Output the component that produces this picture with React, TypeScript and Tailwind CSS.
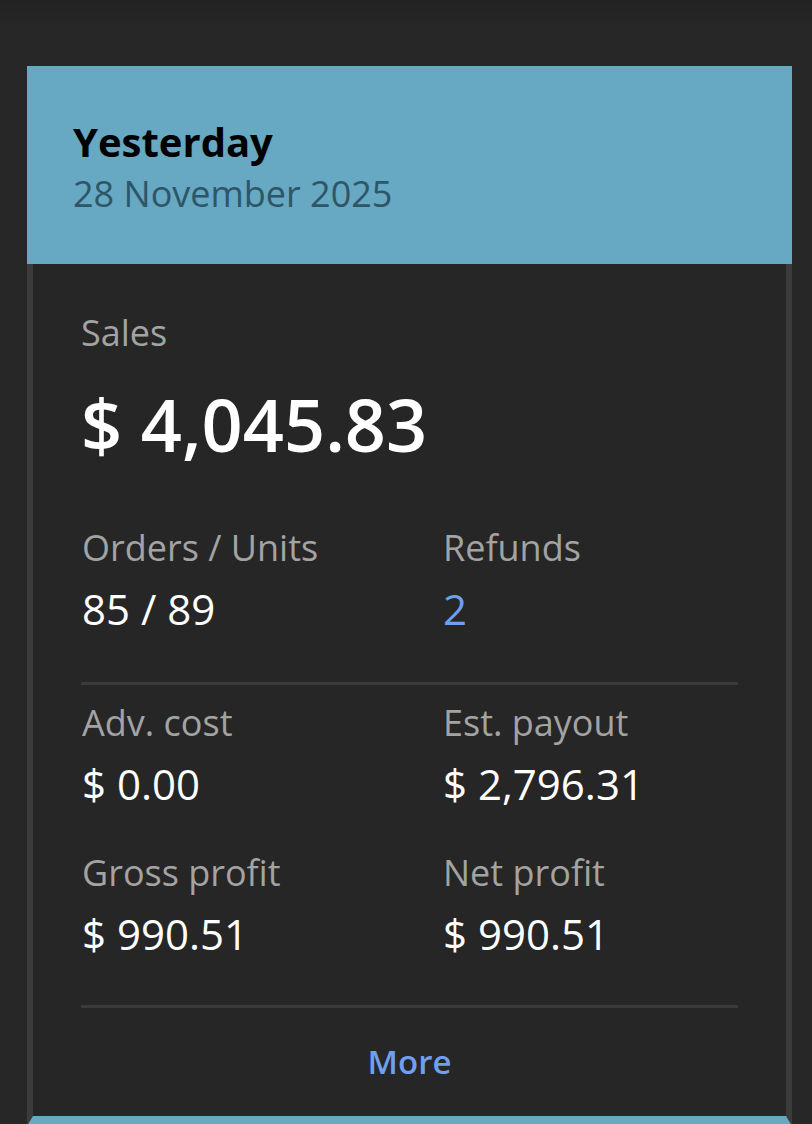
import React from "react";

const font = { fontFamily: '"Open Sans", "Noto Sans", sans-serif' };

function Stat({ label, value, accent }: { label: string; value: string; accent?: boolean }) {
  return (
    <div>
      <p className="text-[36px] leading-[44px] text-[#a3a3a3]">{label}</p>
      <p className={`mt-[15px] text-[42px] leading-[48px] ${accent ? "text-[#6e9ff0]" : "text-white"}`}>{value}</p>
    </div>
  );
}

export default function App() {
  return (
    <div
      className="min-h-[1124px] overflow-hidden bg-[#262626] bg-[linear-gradient(to_bottom,#222222_0px,#272727_28px)] px-[27px] pt-[66px] pb-0"
      style={font}
    >
      {/* header */}
      <div className="w-[765px] bg-[#67a8c2] px-[46px] pt-[52px] pb-[48px]">
        <h1 className="text-[40px] font-bold leading-[48px] text-black">Yesterday</h1>
        <p className="mt-[6px] text-[36px] leading-[44px] text-[#2d5668]">28 November 2025</p>
      </div>

      {/* body */}
      <div className="w-[765px] border-x-[6px] border-b-[10px] border-x-[#3b3b3b] border-b-[#67a8c2] bg-[#262626] px-[48px] pt-[47px] pb-[34px]">
        <p className="text-[36px] leading-[44px] text-[#a3a3a3]">Sales</p>
        <p className="mt-[29px] text-[72px] font-semibold leading-[80px] text-white">$ 4,045.83</p>

        <div className="mt-[62px] grid grid-cols-[361px_1fr] px-px">
          <Stat label="Orders / Units" value="85 / 89" />
          <Stat label="Refunds" value="2" accent />
        </div>

        <div className="mt-[49px] h-[3px] bg-[#3a3a3a]" />

        <div className="mt-[16px] grid grid-cols-[361px_1fr] gap-y-[43px] px-px">
          <Stat label="Adv. cost" value="$ 0.00" />
          <Stat label="Est. payout" value="$ 2,796.31" />
          <Stat label="Gross profit" value="$ 990.51" />
          <Stat label="Net profit" value="$ 990.51" />
        </div>

        <div className="mt-[47px] h-[3px] bg-[#3a3a3a]" />

        <div className="mt-[34px] text-center">
          <span className="text-[33px] font-semibold leading-[40px] text-[#6e9ff0]">More</span>
        </div>
      </div>
    </div>
  );
}
